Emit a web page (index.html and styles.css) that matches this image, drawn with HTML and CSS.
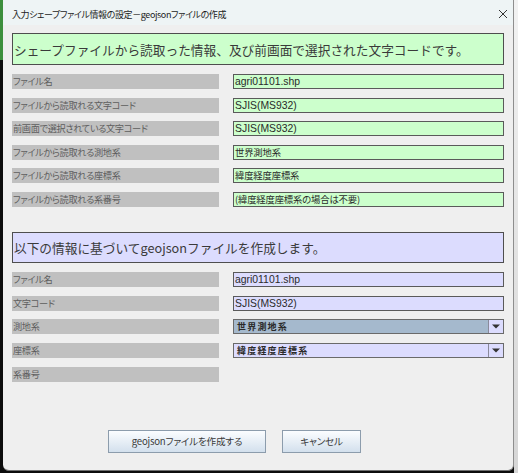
FILE: index.html
```html
<!DOCTYPE html>
<html lang="ja">
<head>
<meta charset="utf-8">
<title>入力シェープファイル情報の設定</title>
<link rel="stylesheet" href="styles.css">
</head>
<body>
<div class="screen">
  <div class="edge-left"></div>
  <div class="window">
    <div class="titlebar">
      <span class="title">入力シェープファイル情報の設定－geojsonファイルの作成</span>
      <svg class="close" width="10" height="10" viewBox="0 0 10 10"><path d="M1 1 L9 9 M9 1 L1 9" stroke="#333" stroke-width="1" fill="none"/></svg>
    </div>
    <div class="content">
      <div class="heading heading-green">シェープファイルから読取った情報、及び前画面で選択された文字コードです。</div>
      <div class="rows rows-first">
        <div class="label">ファイル名</div><div class="field field-green">agri01101.shp</div>
        <div class="label">ファイルから読取れる文字コード</div><div class="field field-green">SJIS(MS932)</div>
        <div class="label">前画面で選択されている文字コード</div><div class="field field-green">SJIS(MS932)</div>
        <div class="label">ファイルから読取れる測地系</div><div class="field field-green cjk">世界測地系</div>
        <div class="label">ファイルから読取れる座標系</div><div class="field field-green cjk">緯度経度座標系</div>
        <div class="label">ファイルから読取れる系番号</div><div class="field field-green cjk">(緯度経度座標系の場合は不要)</div>
      </div>
      <div class="heading heading-lavender">以下の情報に基づいてgeojsonファイルを作成します。</div>
      <div class="rows rows-second">
        <div class="label">ファイル名</div><div class="field field-lavender">agri01101.shp</div>
        <div class="label">文字コード</div><div class="field field-lavender">SJIS(MS932)</div>
        <div class="label">測地系</div>
        <div class="combo">
          <span class="combo-text combo-selected">世界測地系</span>
          <span class="combo-btn"><svg width="8" height="5" viewBox="0 0 8 5"><path d="M0 0.5 H8 L4 4.5 Z" fill="#333"/></svg></span>
        </div>
        <div class="label">座標系</div>
        <div class="combo">
          <span class="combo-text">緯度経度座標系</span>
          <span class="combo-btn"><svg width="8" height="5" viewBox="0 0 8 5"><path d="M0 0.5 H8 L4 4.5 Z" fill="#333"/></svg></span>
        </div>
        <div class="label">系番号</div><div class="empty"></div>
      </div>
      <div class="buttons">
        <button class="btn btn-create">geojsonファイルを作成する</button>
        <button class="btn btn-cancel">キャンセル</button>
      </div>
    </div>
  </div>
  <div class="edge-right"></div>
</div>
</body>
</html>
```
FILE: styles.css
```css
html, body {
  margin: 0;
  padding: 0;
}
body {
  width: 518px;
  height: 473px;
  overflow: hidden;
  background: #0c0c0c;
  font-family: "Noto Sans CJK JP", "Noto Sans", sans-serif;
}
.screen {
  display: flex;
  height: 473px;
}
.edge-left {
  width: 3px;
  flex: none;
  background: linear-gradient(#3d8f3d 0, #3d8f3d 60px, #0c0c0c 60px);
}
.window {
  width: 510px;
  height: 470px;
  flex: none;
  background: #efefef;
  border-right: 1px solid #8e8e8e;
  border-bottom: 1px solid #707070;
  border-bottom-left-radius: 6px;
  border-bottom-right-radius: 6px;
  display: flex;
  flex-direction: column;
}
.edge-right {
  flex: 1;
  background: linear-gradient(#f2f2f2, #d6d6d6);
}
.titlebar {
  height: 25px;
  box-sizing: border-box;
  padding: 3px 5px 0 9px;
  background: #eef4f5;
  display: flex;
  align-items: center;
  justify-content: space-between;
}
.title {
  font-size: 9px;
  letter-spacing: -0.4px;
  color: #1c1c1c;
  font-feature-settings: "palt";
  white-space: nowrap;
}
.close {
  display: block;
}
.content {
  padding: 8px 9px 0 9px;
  display: flex;
  flex-direction: column;
}
.heading {
  box-sizing: border-box;
  border: 1px solid #4e4e4e;
  display: flex;
  align-items: center;
  padding-left: 1px;
  font-size: 12.7px;
  color: #3a3a3a;
  white-space: nowrap;
}
.heading-green {
  height: 32px;
  background: #ccffcc;
}
.heading-lavender {
  height: 31px;
  margin-top: 25px;
  background: #dcdcfe;
}
.rows {
  display: grid;
  grid-template-columns: 207px 1fr;
  column-gap: 14px;
  grid-auto-rows: 15px;
  margin-top: 9px;
}
.rows-first {
  row-gap: 8.6px;
}
.rows-second {
  row-gap: 8.75px;
}
.label {
  background: #c0c0c0;
  font-size: 9.2px;
  letter-spacing: -0.35px;
  line-height: 15px;
  color: #5e5e5e;
  padding-left: 1px;
  font-feature-settings: "palt";
  white-space: nowrap;
}
.field {
  box-sizing: border-box;
  border: 1px solid #5a5a5a;
  font-family: "Liberation Sans", Arial, sans-serif;
  font-size: 10.4px;
  line-height: 13px;
  padding-left: 1px;
  color: #2a2a2a;
  white-space: nowrap;
}
.field.cjk {
  font-family: "Noto Sans CJK JP", sans-serif;
  font-size: 9.4px;
  letter-spacing: -0.2px;
  font-feature-settings: "palt";
}
.field-green {
  background: #ccffcc;
}
.field-lavender {
  background: #dcdcfe;
}
.combo {
  box-sizing: border-box;
  border: 1px solid #6a6a6a;
  display: flex;
  background: #dcdcfe;
}
.combo-text {
  flex: 1;
  font-size: 9px;
  font-weight: bold;
  letter-spacing: 1.2px;
  line-height: 13px;
  padding-left: 3px;
  color: #2a2a2a;
  white-space: nowrap;
}
.combo-selected {
  background: #a5b9cd;
}
.combo-btn {
  width: 14px;
  border-left: 1px solid #8a8a9a;
  display: flex;
  align-items: center;
  justify-content: center;
}
.combo-btn svg {
  display: block;
}
.buttons {
  display: flex;
  gap: 16px;
  margin-top: 48px;
  padding-left: 96px;
}
.btn {
  height: 23px;
  box-sizing: border-box;
  border: 1px solid #8c9cac;
  border-radius: 0;
  background: linear-gradient(#fbfdff, #d3e0ed);
  font-family: "Noto Sans CJK JP", sans-serif;
  font-size: 9.6px;
  letter-spacing: -0.2px;
  color: #3a3a3a;
  font-feature-settings: "palt";
  padding: 0;
  margin: 0;
}
.btn-create {
  width: 158px;
}
.btn-cancel {
  width: 79px;
}
```
